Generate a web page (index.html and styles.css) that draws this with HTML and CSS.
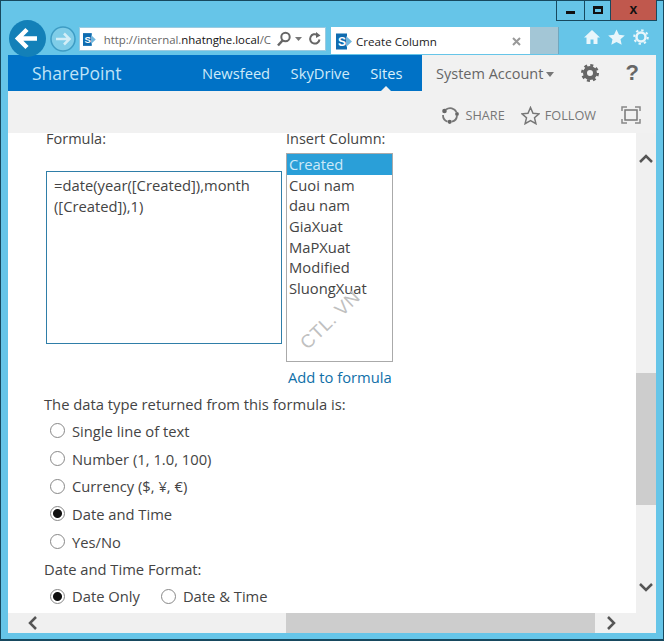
FILE: index.html
```html
<!DOCTYPE html>
<html lang="en">
<head>
<meta charset="utf-8">
<title>Create Column</title>
<link rel="stylesheet" href="styles.css">
</head>
<body>
<div class="window">
  <header class="chrome">
    <div class="win-controls">
      <div class="win-btn win-min"><span class="min-bar"></span></div>
      <div class="win-btn win-max"><span class="max-box"></span></div>
      <div class="win-btn win-close">x</div>
    </div>
    <div class="nav-row">
      <div class="back">
        <svg width="37" height="37" viewBox="0 0 37 37"><circle cx="18.500" cy="18.500" r="18.500" fill="#1380b8"/><path d="M9 18.500H28M18 9.500L9 18.500L18 27.500" fill="none" stroke="#fff" stroke-width="4.500"/></svg>
      </div>
      <div class="forward">
        <svg width="26" height="26" viewBox="0 0 26 26"><circle cx="13" cy="13" r="12" fill="#7fcde8" stroke="#3e9cc4" stroke-width="1.500"/><path d="M6 13H19M14 7.500L19.500 13L14 18.500" fill="none" stroke="#d3eef7" stroke-width="2.500"/></svg>
      </div>
      <div class="address">
        <svg class="sp-icon" width="16" height="17" viewBox="0 0 16 17"><rect x="0" y="0.500" width="11" height="16" fill="#0f6cb0"/><path d="M10 3L16 8.500L10 14Z" fill="#6fb6dd"/><text x="2" y="13" class="sp-letter">S</text></svg>
        <span class="url"><span class="url-dim">http://internal.</span>nhatnghe.local<span class="url-dim">/C</span></span>
        <svg class="addr-icon addr-search" width="16" height="16" viewBox="0 0 16 16"><circle cx="9.500" cy="6" r="4.200" fill="none" stroke="#666" stroke-width="2"/><path d="M6.500 9.500L2 14.500" stroke="#666" stroke-width="2.500"/></svg>
        <svg class="addr-caret" width="7" height="4" viewBox="0 0 7 4"><path d="M0 0H7L3.500 4Z" fill="#777"/></svg>
        <svg class="addr-icon" width="14" height="14" viewBox="0 0 14 14"><path d="M11.500 7.500A4.700 4.700 0 1 1 9.500 3" fill="none" stroke="#666" stroke-width="2"/><path d="M8 0L12.500 3.500L8 6Z" fill="#666"/></svg>
      </div>
      <div class="tab">
        <svg class="sp-icon" width="16" height="17" viewBox="0 0 16 17"><rect x="0" y="0.500" width="11" height="16" fill="#0f6cb0"/><path d="M10 3L16 8.500L10 14Z" fill="#6fb6dd"/><text x="2" y="13" class="sp-letter">S</text></svg>
        <span class="tab-title">Create Column</span>
        <svg class="tab-close" width="9" height="9" viewBox="0 0 9 9"><path d="M1 1L8 8M8 1L1 8" stroke="#999" stroke-width="2"/></svg>
      </div>
      <div class="new-tab"></div>
      <div class="tools">
        <svg width="16" height="16" viewBox="0 0 16 16"><path d="M8 1L16 8.500H13.500V15H9.500V10.500H6.500V15H2.500V8.500H0Z" fill="#e8f6fb"/></svg>
        <svg width="17" height="16" viewBox="0 0 17 16"><path d="M8.500 0.500L11 5.800L16.800 6.400L12.500 10.300L13.700 15.800L8.500 13L3.300 15.800L4.500 10.300L0.200 6.400L6 5.800Z" fill="#e8f6fb"/></svg>
        <svg width="16" height="16" viewBox="0 0 16 16"><circle cx="8" cy="8" r="4.500" fill="none" stroke="#e8f6fb" stroke-width="2.500"/><circle cx="8" cy="8" r="6.800" fill="none" stroke="#e8f6fb" stroke-width="2" stroke-dasharray="2.400 2.940"/></svg>
      </div>
    </div>
  </header>

  <div class="page">
    <div class="suite-bar">
      <div class="suite-blue">
        <span class="brand">SharePoint</span>
        <nav class="suite-nav">
          <span class="nav-link">Newsfeed</span>
          <span class="nav-link">SkyDrive</span>
          <span class="nav-link nav-active">Sites</span>
        </nav>
      </div>
      <div class="suite-user">
        <span class="account">System Account<svg class="account-caret" width="8" height="5" viewBox="0 0 8 5"><path d="M0 0H8L4 5Z" fill="#777"/></svg></span>
        <svg class="gear" width="18" height="18" viewBox="0 0 18 18"><circle cx="9" cy="9" r="5" fill="none" stroke="#666" stroke-width="4"/><circle cx="9" cy="9" r="7.700" fill="none" stroke="#666" stroke-width="2.600" stroke-dasharray="3 3.050"/></svg>
        <span class="help">?</span>
      </div>
    </div>

    <div class="ribbon">
      <span class="ribbon-action">
        <svg width="18" height="18" viewBox="0 0 18 18"><path d="M5 3.500A7 7 0 0 1 15.500 6M16 10A7 7 0 0 1 11 15.700M6.500 15.700A7 7 0 0 1 2 9" fill="none" stroke="#777" stroke-width="1.800"/><circle cx="3.500" cy="5" r="2.300" fill="#666"/><circle cx="16" cy="8" r="1.900" fill="#666"/><circle cx="8.700" cy="15.800" r="2.100" fill="#666"/></svg>
        SHARE
      </span>
      <span class="ribbon-action">
        <svg width="19" height="19" viewBox="0 0 19 19"><path d="M9.500 1.500L12 7.200L18 7.800L13.500 11.800L14.900 17.700L9.500 14.600L4.100 17.700L5.500 11.800L1 7.800L7 7.200Z" fill="none" stroke="#777" stroke-width="1.500"/></svg>
        FOLLOW
      </span>
      <svg class="focus" width="20" height="18" viewBox="0 0 20 18"><rect x="4" y="4" width="12" height="10" fill="none" stroke="#777" stroke-width="1.500"/><path d="M1 5V1H6M14 1H19V5M19 13V17H14M6 17H1V13" fill="none" stroke="#888" stroke-width="1.500"/></svg>
    </div>

    <div class="viewport">
      <main class="content">
        <div class="formula-row">
          <div class="formula-col">
            <div class="field-label">Formula:</div>
            <div class="formula-box">=date(year([Created]),month<br>([Created]),1)</div>
          </div>
          <div class="insert-col">
            <div class="field-label">Insert Column:</div>
            <div class="listbox">
              <div class="option option-selected">Created</div>
              <div class="option">Cuoi nam</div>
              <div class="option">dau nam</div>
              <div class="option">GiaXuat</div>
              <div class="option">MaPXuat</div>
              <div class="option">Modified</div>
              <div class="option">SluongXuat</div>
              <span class="watermark">CTL. VN</span>
            </div>
            <a class="add-link">Add to formula</a>
          </div>
        </div>
        <div class="section-label returned-label">The data type returned from this formula is:</div>
        <div class="radio-group">
          <div class="radio-row"><span class="radio"></span>Single line of text</div>
          <div class="radio-row"><span class="radio"></span>Number (1, 1.0, 100)</div>
          <div class="radio-row"><span class="radio"></span>Currency ($, ¥, €)</div>
          <div class="radio-row"><span class="radio radio-on"></span>Date and Time</div>
          <div class="radio-row"><span class="radio"></span>Yes/No</div>
        </div>
        <div class="section-label format-label">Date and Time Format:</div>
        <div class="radio-inline">
          <div class="radio-row"><span class="radio radio-on"></span>Date Only</div>
          <div class="radio-row"><span class="radio"></span>Date &amp; Time</div>
        </div>
      </main>
      <div class="vscroll">
        <svg width="14" height="9" viewBox="0 0 14 9"><path d="M1 8L7 2L13 8" fill="none" stroke="#555" stroke-width="2.500"/></svg>
        <div class="vtrack"><div class="vthumb"></div></div>
        <svg width="14" height="9" viewBox="0 0 14 9"><path d="M1 1L7 7L13 1" fill="none" stroke="#555" stroke-width="2.500"/></svg>
      </div>
      <div class="hscroll">
        <svg width="9" height="14" viewBox="0 0 9 14"><path d="M8 1L2 7L8 13" fill="none" stroke="#555" stroke-width="2.500"/></svg>
        <div class="htrack"><div class="hthumb"></div></div>
        <svg width="9" height="14" viewBox="0 0 9 14"><path d="M1 1L7 7L1 13" fill="none" stroke="#555" stroke-width="2.500"/></svg>
      </div>
      <div class="corner"></div>
    </div>
  </div>
</div>
</body>
</html>
```
FILE: styles.css
```css
* { box-sizing: border-box; }
html, body { margin: 0; padding: 0; }
body { width: 664px; height: 641px; overflow: hidden; font-family: "Open Sans", "Noto Sans", sans-serif; color: #444; }

.window { width: 664px; height: 641px; display: flex; flex-direction: column; background: #66c5e8; border: 1px solid #17495f; border-bottom-width: 2px; padding-bottom: 6px; }

.chrome { height: 54px; flex: none; padding: 0 6px 0 8px; display: flex; flex-direction: column; }
.win-controls { height: 21px; margin-top: -1px; align-self: flex-end; display: flex; border: 1px solid #17495f; border-top: 0; }
.win-btn { height: 20px; display: flex; align-items: center; justify-content: center; border-right: 1px solid #17495f; }
.win-min { width: 28px; }
.win-max { width: 26px; }
.win-close { width: 45px; background: #c0584d; border-right: 0; font: bold 14px "Liberation Sans", sans-serif; color: #111; padding-bottom: 3px; }
.min-bar { width: 9px; height: 3px; background: #111; margin-top: 4px; }
.max-box { width: 10px; height: 8px; border: 2px solid #111; border-top-width: 3px; }

.nav-row { height: 34px; margin-top: 6px; display: flex; align-items: flex-start; position: relative; }
.back { width: 37px; height: 37px; margin-top: -7px; flex: none; position: relative; z-index: 2; }
.forward { width: 26px; height: 26px; margin-left: 4px; margin-top: -1px; flex: none; }
.address { width: 247px; height: 24px; margin-left: 3px; background: #fff; border: 1px solid #9ccbe0; display: flex; align-items: center; padding: 0 3px; flex: none; }
.sp-letter { font: bold 12px "Liberation Sans", sans-serif; fill: #fff; }
.url { font-size: 11.400px; color: #111; margin-left: 8px; white-space: nowrap; flex: none; }
.url-dim { color: #666; }
.addr-icon { flex: none; }
.addr-search { margin-left: 5px; }
.addr-caret { flex: none; margin: 0 6px 0 3px; }
.tab { width: 199px; height: 27px; margin-left: 5px; background: #fff; display: flex; align-items: center; padding: 2px 9px 0 5px; flex: none; }
.tab-title { font-size: 11.600px; color: #222; margin-left: 4px; flex: 1; }
.new-tab { width: 29px; height: 27px; background: #a3c6d6; border-right: 1px solid #6fa7bf; flex: none; }
.tools { margin-left: 25px; margin-top: 2px; display: flex; gap: 8px; }

.page { flex: 1; margin: 0 7px; display: flex; flex-direction: column; min-height: 0; background: #fff; }

.suite-bar { height: 36px; flex: none; display: flex; background: #f1f1f1; }
.suite-blue { width: 414px; background: #0072c6; display: flex; align-items: center; padding-left: 24px; flex: none; }
.brand { font-size: 17.500px; color: #bfe3f7; width: 170px; }
.suite-nav { display: flex; gap: 20.500px; }
.nav-link { font-size: 14.700px; color: #cfeaf9; }
.nav-active { position: relative; color: #d8f0fb; }
.nav-active::after { content: ""; position: absolute; left: 50%; bottom: -8px; margin-left: -5px; border: 5px solid transparent; border-top: 0; border-bottom-color: #f1f1f1; }
.suite-user { flex: 1; display: flex; align-items: center; padding-left: 14px; }
.account { font-size: 14.500px; color: #666; display: flex; align-items: center; gap: 3px; }
.account-caret { margin-top: 3px; }
.gear { margin-left: 27px; }
.help { font: bold 22px "Liberation Sans", sans-serif; color: #666; margin-left: 26px; }

.ribbon { height: 42px; flex: none; background: #f1f1f1; display: flex; align-items: center; justify-content: flex-end; padding: 6px 15px 0 0; }
.ribbon-action { display: flex; align-items: center; gap: 7px; font-size: 12.700px; color: #777; margin-right: 16px; }
.ribbon-action:nth-child(2) { margin-right: 25px; gap: 5px; }
.focus { flex: none; }

.viewport { flex: 1; min-height: 0; display: grid; grid-template-columns: 628px 20px; grid-template-rows: 480px 20px; }

.content { padding: 0 0 0 36px; background: #fff; }
.formula-row { display: flex; height: 258px; }
.formula-col { width: 242px; padding-left: 2px; }
.insert-col { width: 107px; }
.field-label { font-size: 14.500px; line-height: 16px; height: 22px; margin-top: -2px; color: #444; white-space: nowrap; }
.formula-box { width: 236px; height: 173px; margin-top: 18px; border: 1px solid #2f7ea8; padding: 3px 7px; font-size: 14.750px; line-height: 20.500px; color: #444; white-space: nowrap; background: #fff; }
.listbox { position: relative; width: 107px; height: 209px; border: 1px solid #aaa; overflow: hidden; background: #fff; }
.option { height: 20.700px; line-height: 20.700px; padding: 0 0 0 2px; font-size: 14.750px; color: #444; white-space: nowrap; }
.option-selected { background: #2a9fd8; color: #cdeaf8; }
.watermark { position: absolute; left: 6px; top: 155px; font-size: 18.500px; color: #c0c0c0; transform: rotate(-44deg); white-space: nowrap; letter-spacing: 0.500px; font-family: "Liberation Sans", sans-serif; }
.add-link { display: block; margin-top: 5px; padding-left: 2px; font-size: 14.750px; line-height: 20px; color: #0f6fa8; white-space: nowrap; }

.section-label { font-size: 14.750px; line-height: 20px; color: #444; white-space: nowrap; }
.returned-label { margin-top: 3px; }
.format-label { margin-top: 4px; }
.radio-group { display: flex; flex-direction: column; margin-top: 3px; }
.radio-row { height: 27.700px; display: flex; align-items: center; font-size: 14.750px; color: #444; padding-left: 6px; white-space: nowrap; }
.radio { width: 15px; height: 15px; border: 1px solid #888; border-radius: 50%; margin-right: 7px; flex: none; background: #fff; }
.radio-on { background: radial-gradient(circle, #111 0 4px, #fff 5px); }
.radio-inline { display: flex; gap: 15px; margin-top: 3px; }

.vscroll { background: #f0f0f0; display: flex; flex-direction: column; align-items: center; padding: 21px 0; }
.vtrack { flex: 1; width: 100%; padding-top: 210px; }
.vthumb { width: 20px; height: 132px; background: #cdcdcd; }
.hscroll { background: #f0f0f0; display: flex; align-items: center; padding: 0 20px; }
.htrack { flex: 1; height: 100%; padding-left: 249px; padding-right: 12px; }
.hthumb { height: 100%; background: #cdcdcd; }
.corner { background: #f0f0f0; }
```
